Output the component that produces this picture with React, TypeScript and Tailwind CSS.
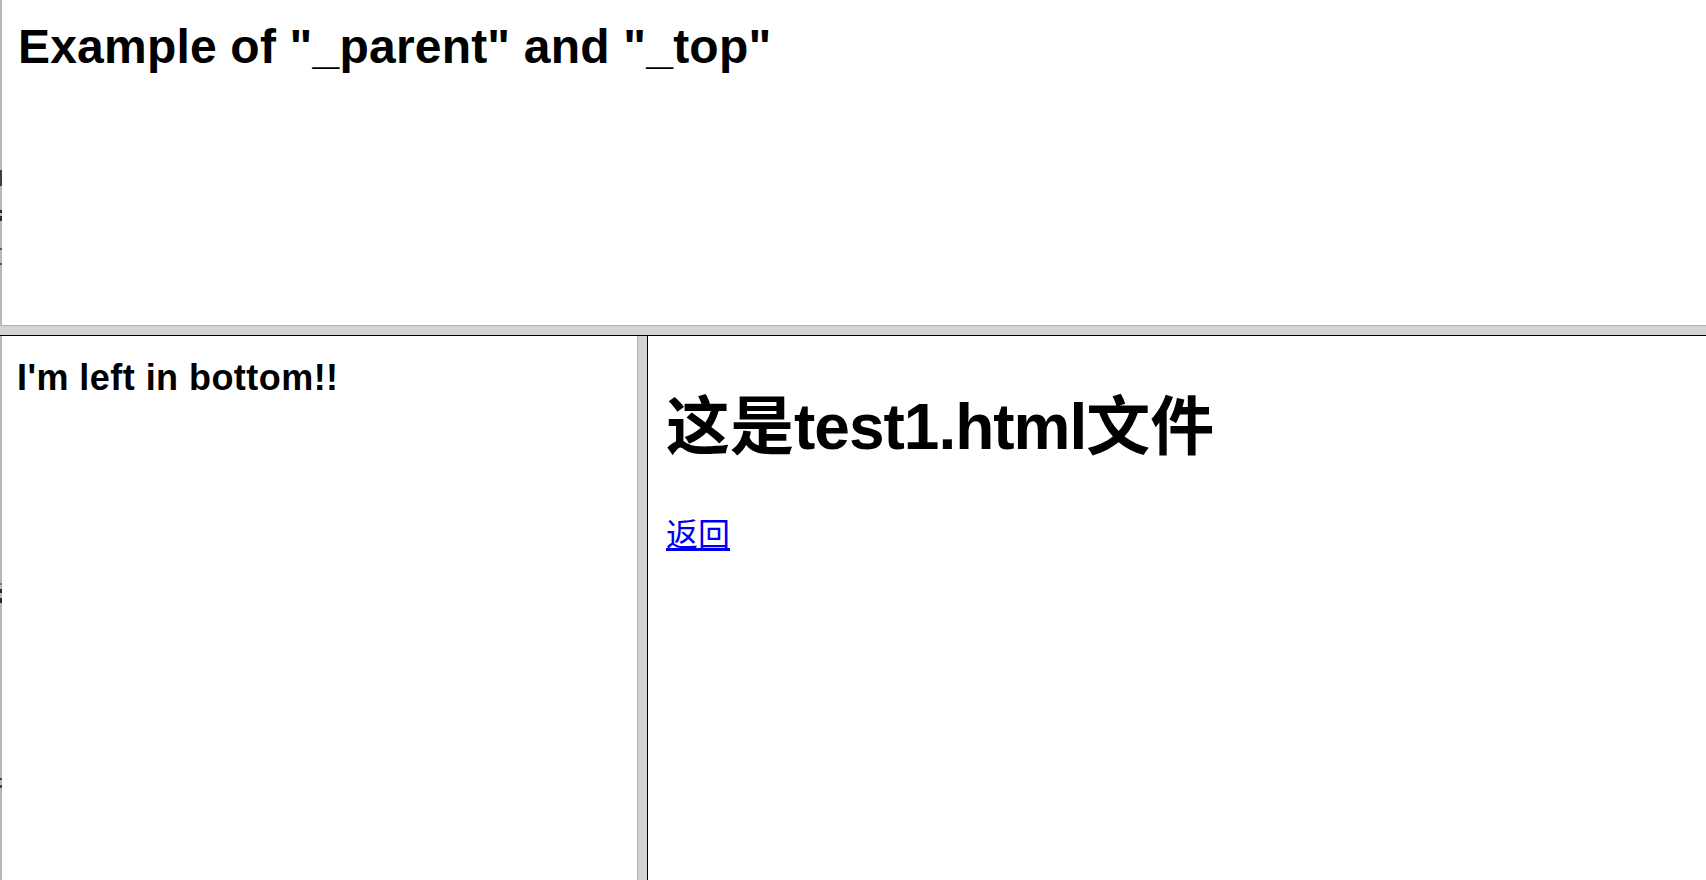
export default function App() {
  // tiny bits of the parent page that show through the 2px left edge
  const edgeMarks = [
    { top: 170, h: 16, c: 'bg-[#3a3d4a]' },
    { top: 210, h: 3, c: 'bg-[#2a2a2a]' },
    { top: 216, h: 5, c: 'bg-[#2a2a2a]' },
    { top: 248, h: 2, c: 'bg-[#555555]' },
    { top: 263, h: 2, c: 'bg-[#555555]' },
    { top: 583, h: 2, c: 'bg-[#777777]' },
    { top: 589, h: 4, c: 'bg-[#2a2a2a]' },
    { top: 598, h: 5, c: 'bg-[#2a2a2a]' },
    { top: 778, h: 2, c: 'bg-[#444444]' },
    { top: 785, h: 3, c: 'bg-[#444444]' },
  ];

  return (
    <div className="relative w-[1706px] h-[880px] bg-white flex flex-col overflow-hidden font-['Liberation_Sans','Noto_Sans_CJK_SC',sans-serif] text-black">
      {/* top frame */}
      <div className="h-[325px] flex-none border-l-2 border-[#b8b8b8] pl-[16px] pt-[19px]">
        <h1 className="text-[48px] leading-[56px] font-bold tracking-[0.2px]">Example of "_parent" and "_top"</h1>
      </div>

      {/* horizontal frame border */}
      <div className="h-[10px] flex-none bg-[#d3d3d3] border-t border-[#b0b0b0]" />

      {/* bottom frames */}
      <div className="flex-1 flex border-t border-black">
        <div className="w-[637px] flex-none border-l-2 border-[#b8b8b8] pl-[15px] pt-[21px]">
          <h2 className="text-[36px] leading-[42px] font-bold tracking-[0.45px]">I'm left in bottom!!</h2>
        </div>
        <div className="w-[10px] flex-none bg-[#d3d3d3] border-l border-[#b0b0b0]" />
        <div className="flex-1 border-l border-black pl-[18px] pt-[51px]">
          <h1 className="text-[64px] leading-[80px] font-bold">
            这是<span className="tracking-[-1px]">test1.html</span>文件
          </h1>
          <div className="mt-[48px] text-[32px] leading-[40px]">
            <a href="#" className="text-[#0000ee] underline">
              返回
            </a>
          </div>
        </div>
      </div>

      {edgeMarks.map((m, i) => (
        <div
          key={i}
          className={`absolute left-0 w-[2px] ${m.c}`}
          style={{ top: m.top, height: m.h }}
        />
      ))}
    </div>
  );
}
